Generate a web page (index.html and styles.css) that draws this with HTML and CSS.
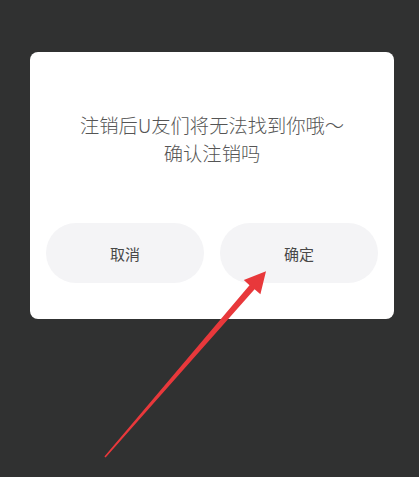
FILE: index.html
```html
<!DOCTYPE html>
<html lang="zh-CN">
<head>
<meta charset="utf-8">
<link rel="stylesheet" href="styles.css">
</head>
<body>
<div class="screen">
  <div class="dialog">
    <div class="message">
      <p class="line">注销后U友们将无法找到你哦～</p>
      <p class="line">确认注销吗</p>
    </div>
    <div class="actions">
      <button class="btn">取消</button>
      <button class="btn">确定</button>
    </div>
  </div>
  <svg class="arrow" width="419" height="477" viewBox="0 0 419 477">
    <polygon points="104.4,456.6 249.5,285.2 243.8,280 266,271.3 260.4,294.2 254.6,289.2 105.6,457.4" fill="#e8383b"/>
  </svg>
</div>
</body>
</html>
```
FILE: styles.css
```css
html, body {
  margin: 0;
  padding: 0;
}
body {
  background: #303131;
  font-family: "Noto Sans CJK SC", "Noto Sans", sans-serif;
}
.screen {
  position: relative;
  width: 419px;
  height: 477px;
  padding-top: 52px;
  box-sizing: border-box;
}
.dialog {
  margin-left: 30px;
  width: 364px;
  height: 267px;
  box-sizing: border-box;
  background: #ffffff;
  border-radius: 8px;
  padding: 59px 16px 0;
  display: flex;
  flex-direction: column;
}
.message {
  text-align: center;
  color: #555555;
  font-size: 19.3px;
  font-weight: 300;
  line-height: 28px;
}
.line {
  margin: 0;
}
.actions {
  margin-top: 56px;
  display: flex;
  gap: 16px;
}
.btn {
  flex: 1;
  height: 60px;
  border: none;
  border-radius: 30px;
  background: #f4f4f6;
  color: #484848;
  font-family: "Noto Sans CJK SC", "Noto Sans", sans-serif;
  font-size: 15px;
  padding: 0;
}
.arrow {
  position: absolute;
  left: 0;
  top: 0;
}
```
